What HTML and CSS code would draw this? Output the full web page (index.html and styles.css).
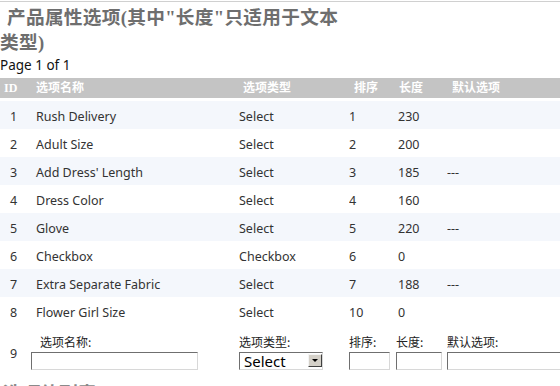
FILE: index.html
```html
<!DOCTYPE html>
<html lang="zh">
<head>
<meta charset="utf-8">
<title>产品属性选项</title>
<link rel="stylesheet" href="styles.css">
</head>
<body>
<div class="page">
  <h1 class="title">产品属性选项(其中"长度"只适用于文本类型)</h1>
  <div class="pager">Page 1 of 1</div>
  <table class="grid">
    <colgroup>
      <col class="c1"><col class="c2"><col class="c3"><col class="c4"><col class="c5"><col class="c6">
    </colgroup>
    <thead>
      <tr>
        <th class="h1c">ID</th>
        <th class="h2c">选项名称</th>
        <th class="h3c">选项类型</th>
        <th class="h4c">排序</th>
        <th class="h5c">长度</th>
        <th class="h6c">默认选项</th>
      </tr>
    </thead>
    <tbody>
      <tr class="alt"><td class="d1">1</td><td class="d2">Rush Delivery</td><td class="d3">Select</td><td class="d4">1</td><td class="d5">230</td><td class="d6"></td></tr>
      <tr><td class="d1">2</td><td class="d2">Adult Size</td><td class="d3">Select</td><td class="d4">2</td><td class="d5">200</td><td class="d6"></td></tr>
      <tr class="alt"><td class="d1">3</td><td class="d2">Add Dress' Length</td><td class="d3">Select</td><td class="d4">3</td><td class="d5">185</td><td class="d6">---</td></tr>
      <tr><td class="d1">4</td><td class="d2">Dress Color</td><td class="d3">Select</td><td class="d4">4</td><td class="d5">160</td><td class="d6"></td></tr>
      <tr class="alt"><td class="d1">5</td><td class="d2">Glove</td><td class="d3">Select</td><td class="d4">5</td><td class="d5">220</td><td class="d6">---</td></tr>
      <tr><td class="d1">6</td><td class="d2">Checkbox</td><td class="d3">Checkbox</td><td class="d4">6</td><td class="d5">0</td><td class="d6"></td></tr>
      <tr class="alt"><td class="d1">7</td><td class="d2">Extra Separate Fabric</td><td class="d3">Select</td><td class="d4">7</td><td class="d5">188</td><td class="d6">---</td></tr>
      <tr><td class="d1">8</td><td class="d2">Flower Girl Size</td><td class="d3">Select</td><td class="d4">10</td><td class="d5">0</td><td class="d6"></td></tr>
      <tr class="form-row">
        <td class="f1">9</td>
        <td class="f2"><label class="lbl lbl-name">选项名称:</label><input class="box box-name" type="text"></td>
        <td class="f3"><label class="lbl">选项类型:</label>
          <span class="sel"><select class="sel-input"><option>Select</option><option>Checkbox</option></select><span class="sel-btn"></span></span>
        </td>
        <td class="f4"><label class="lbl">排序:</label><input class="box box-sort" type="text"></td>
        <td class="f5"><label class="lbl">长度:</label><input class="box box-len" type="text"></td>
        <td class="f6"><label class="lbl">默认选项:</label><input class="box box-def" type="text"></td>
      </tr>
    </tbody>
  </table>
  <h2 class="sub">选项值列表</h2>
</div>
</body>
</html>
```
FILE: styles.css
```css
html, body {
  margin: 0;
  padding: 0;
  overflow: hidden;
  background: #fff;
}

body {
  font-family: "Noto Sans", "Noto Sans CJK SC", sans-serif;
  font-size: 12.5px;
  color: #333;
}

.page {
  margin-top: 1px;
  border-top: 1px solid #d0d0d0;
}

.title {
  margin: 0;
  padding-top: 3px;
  width: 348px;
  text-indent: 7px;
  letter-spacing: 0.3px;
  font: bold 18.67px/25px "Liberation Serif", "Noto Sans CJK SC", serif;
  color: #6e6e6e;
}

.pager {
  margin-top: 2px;
  line-height: 16px;
  font-size: 13.5px;
  color: #111;
}

.grid {
  margin-top: 5px;
  width: 560px;
  table-layout: fixed;
  border-collapse: separate;
  border-spacing: 0;
}

.c1 { width: 31px; }
.c2 { width: 208px; }
.c3 { width: 110px; }
.c4 { width: 47px; }
.c5 { width: 51px; }
.c6 { width: 113px; }

.grid th {
  height: 20px;
  padding: 0;
  text-align: left;
  background: #c4c4c4;
  color: #fff;
  font: bold 12px/20px "Liberation Serif", "Noto Sans CJK SC", serif;
  border-bottom: 3px solid #fff;
  white-space: nowrap;
}

.h1c { padding-left: 4px !important; }
.h2c { padding-left: 5px !important; }
.h3c { padding-left: 4px !important; }
.h4c { padding-left: 5px !important; }
.h5c { padding-left: 3px !important; }
.h6c { padding-left: 5px !important; }

.grid td {
  height: 24px;
  padding: 4px 0 0 0;
  line-height: 24px;
  vertical-align: top;
  white-space: nowrap;
  overflow: hidden;
}

.grid tr.alt td {
  background: #f4f7fc;
}

.d1 { padding-left: 10px !important; }
.d2 { padding-left: 5px !important; }
.d5 { padding-left: 2px !important; }

.grid .form-row td {
  height: auto;
  padding: 10px 0 5px 0;
  line-height: 14px;
  overflow: visible;
}

.grid .form-row .f1 {
  padding: 21px 0 0 10px;
  line-height: 16px;
}

.grid .form-row .f6 {
  overflow: hidden;
}

.lbl {
  display: block;
  height: 14px;
  line-height: 14px;
  font-family: "Noto Sans CJK SC", sans-serif;
  font-size: 12px;
  color: #222;
  white-space: nowrap;
}

.lbl-name {
  padding-left: 9px;
}

.box {
  display: block;
  box-sizing: border-box;
  margin: 3px 0 0 0;
  height: 18px;
  padding: 0 2px;
  border: 1px solid;
  border-color: #6f6f6f #d8d8d8 #d8d8d8 #6f6f6f;
  background: #fff;
  font: 12px "Noto Sans", sans-serif;
  outline: none;
}

.box-name { width: 167px; }
.box-sort { width: 41px; }
.box-len { width: 46px; }
.box-def { width: 140px; }

.sel {
  position: relative;
  display: block;
  margin-top: 3px;
  width: 84px;
  height: 18px;
}

.sel-input {
  appearance: none;
  -webkit-appearance: none;
  box-sizing: border-box;
  display: block;
  width: 84px;
  height: 18px;
  margin: 0;
  padding: 0 0 0 4px;
  border: 1px solid;
  border-color: #6f6f6f #d8d8d8 #d8d8d8 #6f6f6f;
  border-radius: 0;
  background: #fff;
  color: #000;
  font: 15px/16px "Noto Sans", sans-serif;
  outline: none;
}

.sel-btn {
  position: absolute;
  right: 1px;
  top: 2px;
  box-sizing: border-box;
  width: 14px;
  height: 13px;
  background: #d4d0c8;
  border: 1px solid;
  border-color: #f4f4f4 #404040 #404040 #f4f4f4;
  pointer-events: none;
}

.sel-btn::after {
  content: "";
  position: absolute;
  left: 3px;
  top: 4px;
  border-left: 3px solid transparent;
  border-right: 3px solid transparent;
  border-top: 3px solid #000;
}

.sub {
  margin: 6px 0 0 0;
  padding-left: 3px;
  font: bold 18.67px/25px "Liberation Serif", "Noto Sans CJK SC", serif;
  color: #8a8a8a;
}
```
